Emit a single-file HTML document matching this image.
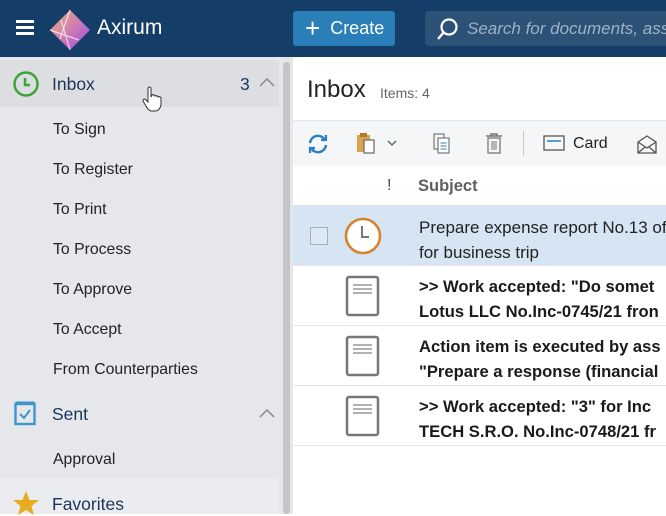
<!DOCTYPE html>
<html><head><style>
*{margin:0;padding:0;box-sizing:border-box}
body{width:666px;height:514px;overflow:hidden;font-family:"Liberation Sans",sans-serif;background:#fff;position:relative;color:#222}
.hdr{position:absolute;left:0;top:0;width:666px;height:57px;background:#143d68}
.side{position:absolute;left:0;top:57px;width:293px;height:457px;background:#e5e7eb}
.sb{position:absolute;left:283px;top:62px;width:7px;height:452px;background:#c2c4c7;border-radius:3px}
.t{position:absolute;white-space:nowrap}
.sub{font-size:15.8px;color:#222;left:53px}
.row{position:absolute;left:293px;width:373px;border-bottom:1px solid #e3e5e8}
.bold{font-weight:bold;font-size:16.6px;color:#1a1a1a}
</style></head><body>
<div class="hdr"></div>
<div class="t" style="left:16px;top:20px;width:18px;height:3px;background:#fff;box-shadow:0 6px 0 #fff,0 12px 0 #fff"></div>
<svg class="t" style="left:49px;top:9px" width="42" height="42" viewBox="0 0 42 42"><defs><linearGradient id="g" x1="0" y1="0" x2="1" y2="1"><stop offset="0" stop-color="#f2b47a"/><stop offset="1" stop-color="#a548e8"/></linearGradient></defs><polygon points="21,1 41,21 21,41 1,21" fill="url(#g)"/><path d="M21 1 L11 30 M1 21 L30 31 M21 41 L12 11" stroke="#fff" stroke-width="1.2" opacity=".7"/></svg>
<div class="t" style="left:97px;top:16px;font-size:21px;color:#fff">Axirum</div>
<div class="t" style="left:293px;top:11px;width:102px;height:35px;background:#2a7fb8;border-radius:3px;color:#fff;font-size:18px;line-height:35px;padding-left:12px"><span style="font-size:26px;vertical-align:-3px">+</span>&nbsp;&nbsp;Create</div>
<div class="t" style="left:425px;top:11px;width:260px;height:35px;background:#2d5277;border-radius:4px"></div>
<svg class="t" style="left:436px;top:17px" width="24" height="24"><circle cx="13" cy="10" r="7.5" fill="none" stroke="#fff" stroke-width="2.2"/><path d="M8 15 L2 22" stroke="#fff" stroke-width="2.4"/></svg>
<div class="t" style="left:467px;top:19px;font-size:17px;color:#9fb2c6;font-style:italic">Search for documents, assi</div>
<div class="side"></div>
<div class="t" style="left:0;top:60px;width:279px;height:47px;background:#dcdee2"></div>
<div class="t" style="left:0;top:478px;width:279px;height:36px;background:#eaecef"></div>
<div class="sb"></div>
<svg class="t" style="left:12px;top:70px" width="28" height="28"><circle cx="14" cy="14" r="11.5" fill="none" stroke="#3aa635" stroke-width="2.5"/><path d="M13 8 V15 H18" fill="none" stroke="#3aa635" stroke-width="2.5"/></svg>
<div class="t" style="left:52px;top:74px;font-size:17.5px;color:#1c3557">Inbox</div>
<div class="t" style="left:240px;top:74px;font-size:17.5px;color:#1c3557">3</div>
<svg class="t" style="left:258px;top:76px" width="18" height="12"><path d="M2 10 L9 3 L16 10" fill="none" stroke="#888" stroke-width="1.5"/></svg>
<div class="t sub" style="top:121px">To Sign</div>
<div class="t sub" style="top:161px">To Register</div>
<div class="t sub" style="top:201px">To Print</div>
<div class="t sub" style="top:241px">To Process</div>
<div class="t sub" style="top:281px">To Approve</div>
<div class="t sub" style="top:321px">To Accept</div>
<div class="t sub" style="top:361px">From Counterparties</div>
<svg class="t" style="left:14px;top:400px" width="22" height="26"><rect x="1.5" y="4" width="19" height="20" fill="none" stroke="#3b96cf" stroke-width="2.4"/><path d="M1.5 3 H20.5" stroke="#3b96cf" stroke-width="3"/><path d="M6 14 L10 18 L16 10" fill="none" stroke="#3b96cf" stroke-width="2"/></svg>
<div class="t" style="left:52px;top:404px;font-size:17.5px;color:#1c3557">Sent</div>
<svg class="t" style="left:258px;top:407px" width="18" height="12"><path d="M2 10 L9 3 L16 10" fill="none" stroke="#888" stroke-width="1.5"/></svg>
<div class="t sub" style="top:451px">Approval</div>
<svg class="t" style="left:12px;top:490px" width="28" height="26"><polygon points="14,1 17.5,10 27,10 19.5,16 22,25 14,20 6,25 8.5,16 1,10 10.5,10" fill="#e6ac1e"/></svg>
<div class="t" style="left:52px;top:494px;font-size:17.5px;color:#1c3557">Favorites</div>

<div class="t" style="left:307px;top:76px;font-size:24px;color:#222">Inbox</div>
<div class="t" style="left:380px;top:85px;font-size:14px;color:#666">Items: 4</div>
<div class="t" style="left:293px;top:120px;width:373px;height:46px;background:#f5f6f8;border-top:1px solid #e3e5e8"></div>
<svg class="t" style="left:306px;top:132px" width="24" height="24"><path d="M4 11 A8 8 0 0 1 19 8 M20 13 A8 8 0 0 1 5 16" fill="none" stroke="#2a7fc4" stroke-width="2.4"/><path d="M15 8 H20 V3" fill="none" stroke="#2a7fc4" stroke-width="2.2"/><path d="M9 16 H4 V21" fill="none" stroke="#2a7fc4" stroke-width="2.2"/></svg>
<svg class="t" style="left:356px;top:132px" width="24" height="24"><rect x="1" y="3" width="13" height="17" fill="#d9a44d"/><rect x="4" y="1" width="7" height="4" fill="#b07a2a"/><rect x="8" y="8" width="10" height="13" fill="#fff" stroke="#666" stroke-width="1.2"/></svg>
<svg class="t" style="left:386px;top:138px" width="12" height="10"><path d="M2 3 L6 7 L10 3" fill="none" stroke="#666" stroke-width="1.5"/></svg>
<svg class="t" style="left:432px;top:133px" width="22" height="22"><rect x="2" y="1" width="10" height="15" fill="none" stroke="#777" stroke-width="1.2"/><rect x="6" y="5" width="11" height="15" fill="#fff" stroke="#777" stroke-width="1.2"/><path d="M8.5 10H14.5M8.5 13H14.5M8.5 16H14.5" stroke="#2a7fc4"/></svg>
<svg class="t" style="left:483px;top:132px" width="22" height="22"><path d="M3 4H19M8 4V2H14V4" fill="none" stroke="#777" stroke-width="1.5"/><rect x="5" y="6" width="12" height="15" fill="none" stroke="#777" stroke-width="1.3"/><path d="M9 9V18M11 9V18M13 9V18" stroke="#777"/></svg>
<div class="t" style="left:523px;top:131px;width:1px;height:25px;background:#ccc"></div>
<svg class="t" style="left:543px;top:134px" width="22" height="18"><rect x="1" y="2" width="20" height="14" fill="none" stroke="#555" stroke-width="1.3"/><path d="M4 7H18" stroke="#2a7fc4" stroke-width="1.5"/></svg>
<div class="t" style="left:573px;top:135px;font-size:16px;color:#222">Card</div>
<svg class="t" style="left:636px;top:134px" width="24" height="20"><path d="M2 8 L11 2 L20 8 V19 H2 Z M2 8 L11 14 L20 8 M2 19 L9 13 M20 19 L13 13" fill="none" stroke="#555" stroke-width="1.3"/></svg>
<div class="row" style="top:166px;height:40px;border-bottom:1px solid #dde0e4"></div>
<div class="t" style="left:387px;top:177px;font-size:16px;color:#444">!</div>
<div class="t" style="left:418px;top:177px;font-size:16.5px;color:#444;font-weight:bold;opacity:.85">Subject</div>
<div class="row" style="top:206px;height:60px;background:#d6e5f3;border-bottom:1px solid #e3e5e8"></div>
<div class="t" style="left:310px;top:227px;width:18px;height:18px;border:1.5px solid #a5b0bd;background:#dde8f3"></div>
<svg class="t" style="left:343px;top:216px" width="40" height="40"><circle cx="20" cy="20" r="17" fill="#fff" stroke="#d7822f" stroke-width="2.6"/><path d="M19 10 V21 H26" fill="none" stroke="#777" stroke-width="2"/></svg>
<div class="t" style="left:419px;top:215px;font-size:17px;line-height:25px;color:#222">Prepare expense report No.13 of<br>for business trip</div>
<div class="row" style="top:266px;height:60px"></div>
<div class="row" style="top:326px;height:60px"></div>
<div class="row" style="top:386px;height:60px"></div>
<svg class="t" style="left:345px;top:275px" width="36" height="42"><rect x="2" y="2" width="31" height="38" rx="2" fill="#fff" stroke="#777" stroke-width="2.5"/><path d="M8 10H27M8 14H27M8 18H27" stroke="#999" stroke-width="1.4"/></svg>
<svg class="t" style="left:345px;top:335px" width="36" height="42"><rect x="2" y="2" width="31" height="38" rx="2" fill="#fff" stroke="#777" stroke-width="2.5"/><path d="M8 10H27M8 14H27M8 18H27" stroke="#999" stroke-width="1.4"/></svg>
<svg class="t" style="left:345px;top:395px" width="36" height="42"><rect x="2" y="2" width="31" height="38" rx="2" fill="#fff" stroke="#777" stroke-width="2.5"/><path d="M8 10H27M8 14H27M8 18H27" stroke="#999" stroke-width="1.4"/></svg>
<div class="t bold" style="left:419px;top:274px;line-height:25px">&gt;&gt; Work accepted: "Do somet<br>Lotus LLC No.Inc-0745/21 fron</div>
<div class="t bold" style="left:419px;top:334px;line-height:25px">Action item is executed by ass<br>"Prepare a response (financial</div>
<div class="t bold" style="left:419px;top:394px;line-height:25px">&gt;&gt; Work accepted: "3" for Inc<br>TECH S.R.O. No.Inc-0748/21 fr</div>
<svg class="t" style="left:140px;top:85px" width="24" height="28"><path d="M8 3 Q10 1 11 3 V12 L12 10 Q14 9 15 11 Q17 10 18 12 Q20 11 21 13 V20 Q20 25 16 26 H11 Q8 25 6 21 L3 16 Q3 14 5 14 L8 17 Z" fill="#fff" stroke="#333" stroke-width="1"/></svg>
</body></html>
